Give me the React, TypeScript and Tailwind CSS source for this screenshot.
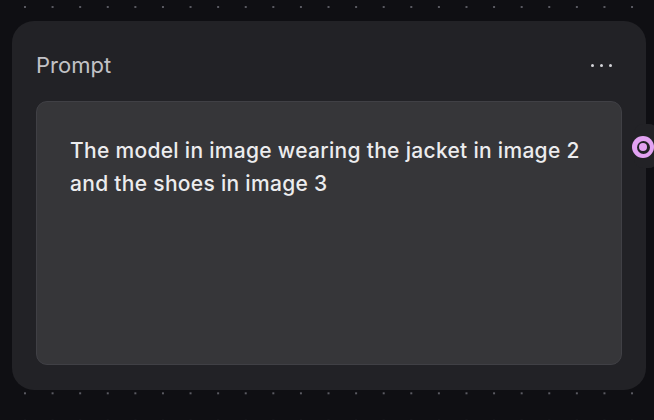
import React from 'react';

const PromptNode: React.FC = () => {
    return (
        <div className="relative w-[634px] h-[369px] rounded-[22px] bg-[#222226] px-[24px] pt-[27px] pb-[25px] flex flex-col">
            <div className="flex items-center justify-between h-[34px] mb-[19px]">
                <span className="text-[22px] leading-[34px] text-[#c2c2c6]">Prompt</span>
                <div className="flex gap-[6px] pr-[10px]">
                    <span className="w-[3px] h-[3px] rounded-full bg-[#d4d4d8]" />
                    <span className="w-[3px] h-[3px] rounded-full bg-[#d4d4d8]" />
                    <span className="w-[3px] h-[3px] rounded-full bg-[#d4d4d8]" />
                </div>
            </div>
            <div className="flex-1 rounded-[11px] bg-[#363639] border border-[#404045] pl-[33px] pr-[30px] pt-[32px]">
                <p className="text-[21px] leading-[33px] tracking-[0.3px] text-[#ececee] font-medium">
                    The model in image wearing the jacket in image 2 and the shoes in image 3
                </p>
            </div>
            {/* output handle */}
            <div className="absolute left-[622px] top-[103px] w-[24px] h-[44px] rounded-[9px] bg-[#222226]" />
            <div className="absolute left-[620px] top-[115px] w-[22px] h-[22px] rounded-full bg-[#e2a2f2] flex items-center justify-center">
                <div className="w-[13px] h-[13px] rounded-full bg-[#222226] flex items-center justify-center">
                    <div className="w-[8px] h-[8px] rounded-full bg-[#e2a2f2]" />
                </div>
            </div>
        </div>
    );
};

export default function App() {
    return (
        <div
            className="w-[654px] h-[420px] overflow-hidden bg-[#0f0f13] bg-[radial-gradient(circle,#5a5a62_0.8px,transparent_1.3px)] bg-[size:27.6px_27.6px] bg-[position:11.2px_-6.8px] pt-[21px] pl-[12px]"
            style={{ fontFamily: 'Inter, "Noto Sans", sans-serif' }}
        >
            <PromptNode />
        </div>
    );
}
